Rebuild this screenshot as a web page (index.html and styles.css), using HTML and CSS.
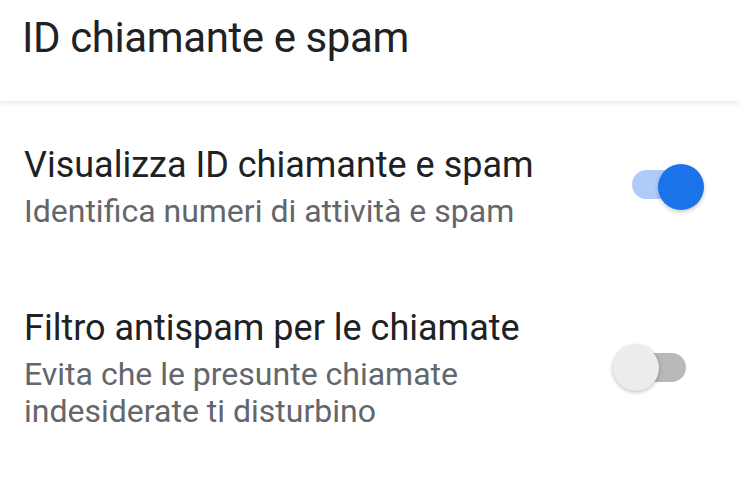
FILE: index.html
```html
<!DOCTYPE html>
<html lang="it">
<head>
<meta charset="utf-8">
<link rel="stylesheet" href="styles.css">
</head>
<body>
<header class="appbar">
  <h1 class="appbar-title">ID chiamante e spam</h1>
</header>
<main class="list">
  <div class="item item-first">
    <div class="texts">
      <div class="title">Visualizza ID chiamante e spam</div>
      <div class="summary">Identifica numeri di attività e spam</div>
    </div>
    <div class="switch on"><span class="track"></span><span class="thumb"></span></div>
  </div>
  <div class="item item-second">
    <div class="texts">
      <div class="title">Filtro antispam per le chiamate</div>
      <div class="summary">Evita che le presunte chiamate<br>indesiderate ti disturbino</div>
    </div>
    <div class="switch off"><span class="track"></span><span class="thumb"></span></div>
  </div>
</main>
</body>
</html>
```
FILE: styles.css
```css
html, body {
  margin: 0;
  padding: 0;
  background: #ffffff;
  width: 740px;
  height: 480px;
  overflow: hidden;
  font-family: Roboto, "Noto Sans", sans-serif;
}
.appbar {
  height: 101px;
  box-sizing: border-box;
  padding: 13px 0 0 22px;
  background: #fff;
  box-shadow: 0 2px 6px rgba(0,0,0,0.10);
  position: relative;
  z-index: 1;
}
.appbar-title {
  margin: 0;
  font-weight: 400;
  font-size: 42px;
  line-height: 50px;
  color: #202124;
  letter-spacing: -0.4px;
}
.list {
  display: flex;
  flex-direction: column;
}
.item {
  display: flex;
  align-items: center;
  justify-content: space-between;
  padding: 0 36px 0 24px;
}
.item-first {
  padding-top: 42px;
}
.item-second {
  padding-top: 76px;
}
.title {
  font-size: 36px;
  line-height: 44px;
  color: #202124;
}
.summary {
  font-size: 32px;
  line-height: 37px;
  color: #63666a;
  margin-top: 6px;
}
.switch {
  position: relative;
  width: 91px;
  height: 46px;
  flex: none;
}
.track {
  position: absolute;
  top: 8px;
  height: 29px;
  border-radius: 15px;
}
.thumb {
  position: absolute;
  top: 0;
  width: 46px;
  height: 46px;
  border-radius: 50%;
}
.switch.on .track {
  left: 19px;
  width: 64px;
  top: 6px;
  background: #aecbfa;
}
.switch.on .thumb {
  left: 45px;
  background: #1a73e8;
  box-shadow: 0 2px 4px rgba(0,0,0,0.22);
}
.switch.off .track {
  left: 9px;
  width: 64px;
  background: #b9b9b9;
}
.switch.off .thumb {
  left: 0;
  background: #ececec;
  box-shadow: 0 1px 4px rgba(0,0,0,0.28);
}
```
